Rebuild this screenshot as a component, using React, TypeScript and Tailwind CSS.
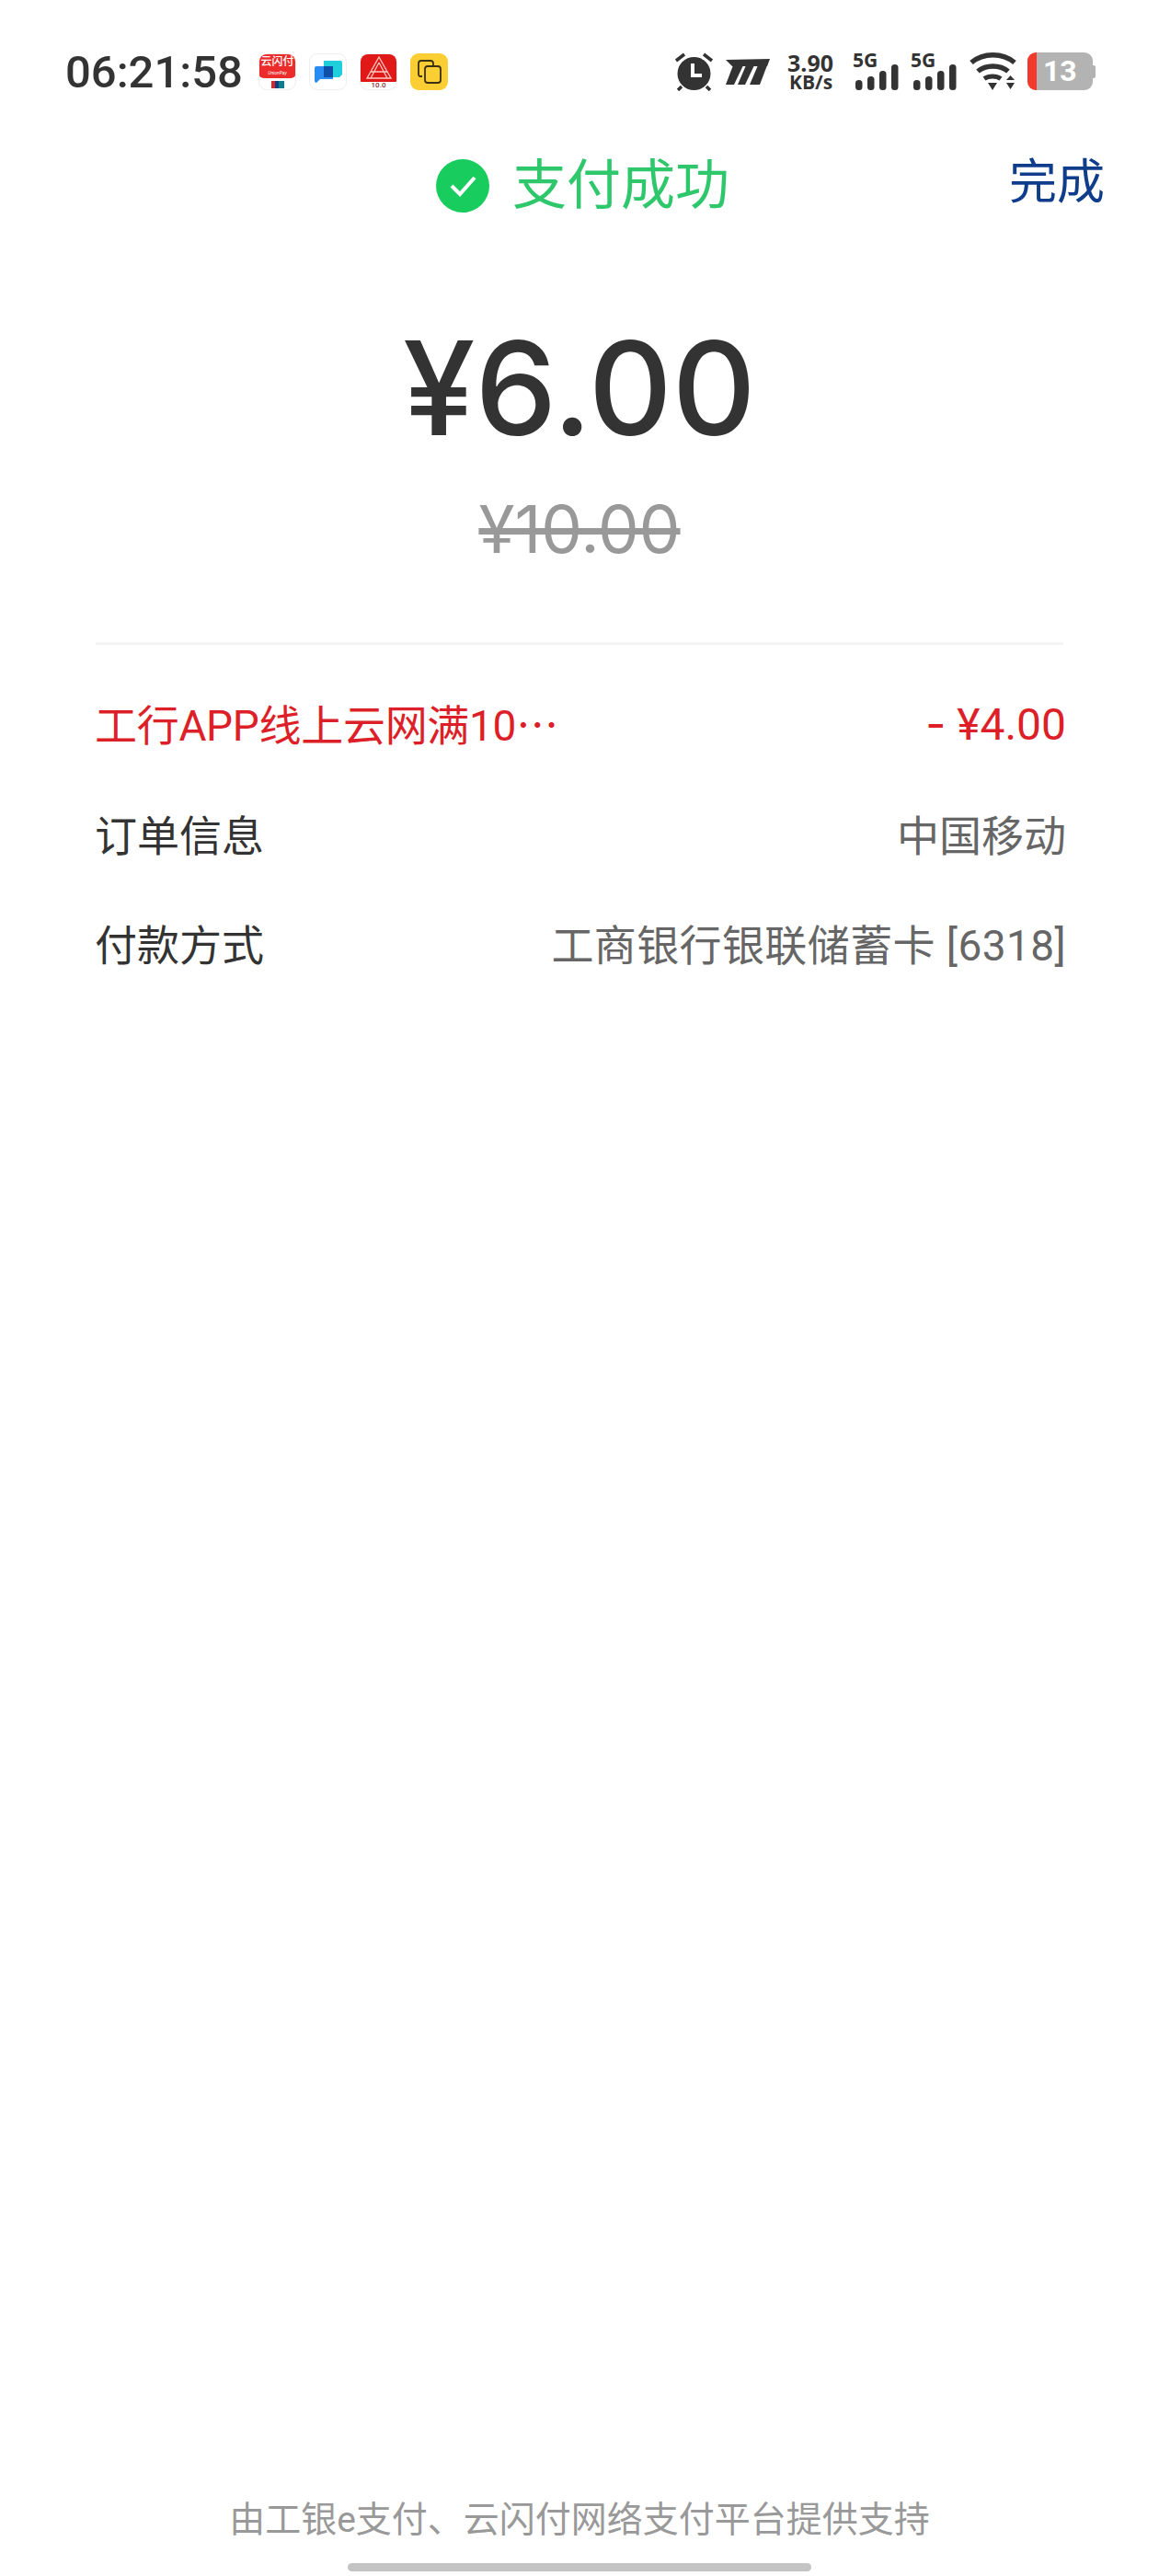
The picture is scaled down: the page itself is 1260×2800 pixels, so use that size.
const Signal = () => (
  <div className="flex flex-col w-[50px] h-[41px] mt-[1px]">
    <span className="font-['Open_Sans',sans-serif] font-bold text-[21px] leading-[15px] text-[#333]">5G</span>
    <svg className="-mt-[3px] ml-[3px]" width="47" height="28" viewBox="0 0 47 28">
      <rect x="0" y="17" width="7.5" height="11" rx="3.5" fill="#333" />
      <rect x="13" y="13" width="7.5" height="15" rx="3.5" fill="#333" />
      <rect x="26" y="7" width="7.5" height="21" rx="3.5" fill="#333" />
      <rect x="39" y="0" width="7.5" height="28" rx="3.5" fill="#333" />
    </svg>
  </div>
);

export default function App() {
  const font = "font-['Roboto','Noto_Sans_CJK_SC',sans-serif]";
  return (
    <div className={`w-[1260px] h-[2800px] bg-white flex flex-col ${font}`}>
      <div className="h-[170px] pl-[71px] pt-[57px] flex items-start">
        <span className="font-medium text-[49px] leading-[43px] text-[#333] w-[210px] shrink-0">06:21:58</span>
        <div className="flex gap-[14px] mt-[1px]">
          <div className="w-[41px] h-[40px] rounded-[9px] border border-[#eee] overflow-hidden flex flex-col items-center">
            <div className="w-[41px] h-[27px] -mt-[1px] bg-[#ec2b2b] rounded-b-[6px] flex flex-col items-center text-white">
              <span className="text-[12px] leading-[17px] mt-[1px] font-medium whitespace-nowrap">云闪付</span>
              <span className="text-[5px] leading-[6px] italic">UnionPay</span>
            </div>
            <svg className="mt-[3px]" width="14" height="8" viewBox="0 0 14 8">
              <rect x="0" y="0" width="6" height="8" fill="#d8262c" />
              <rect x="4" y="0" width="5" height="8" fill="#0f3d82" />
              <rect x="8" y="0" width="6" height="8" fill="#0c7f8c" />
            </svg>
          </div>
          <div className="w-[41px] h-[40px] rounded-[9px] border border-[#eee] flex items-center justify-center">
            <svg width="30" height="26" viewBox="0 0 30 26">
              <path d="M10 1h18a2 2 0 0 1 2 2v13l-3 3h-7V7H10z" fill="#1fd0dc" />
              <path d="M2 7h18v14H6l-4 4a2 2 0 0 1-2-2V9a2 2 0 0 1 2-2z" fill="#2a8cf2" />
              <path d="M10 7h10v12H10z" fill="#0f4fa8" />
            </svg>
          </div>
          <div className="w-[41px] h-[40px] rounded-[9px] border border-[#eee] overflow-hidden flex flex-col items-center">
            <div className="w-[41px] h-[31px] -mt-[1px] bg-[#e01818] rounded-b-[3px] flex items-center justify-center">
              <svg width="28" height="26" viewBox="0 0 28 26" fill="none" stroke="#ffc9c0" strokeWidth="1.3">
                <path d="M14 1L27 24H1z" />
                <path d="M14 7L23 24M14 7L5 24M5 17h18" />
              </svg>
            </div>
            <span className="text-[8px] leading-[8px] font-medium text-[#8a3030]">10.0</span>
          </div>
          <div className="w-[41px] h-[40px] rounded-[9px] bg-[#fbcf33] flex items-center justify-center">
            <svg width="26" height="26" viewBox="0 0 26 26" fill="none" stroke="#3b3012" strokeWidth="1.8">
              <path d="M5 18H3a2 2 0 0 1-2-2V4a3 3 0 0 1 3-3h10a3 3 0 0 1 3 3v3" />
              <rect x="8" y="7" width="17" height="18" rx="3" />
            </svg>
          </div>
        </div>
        <div className="flex items-start ml-[245px]">
          <svg width="45" height="42" viewBox="0 0 45 42">
            <circle cx="22.5" cy="23" r="18" fill="#333" />
            <path d="M21 12v13h10" fill="none" stroke="#fff" strokeWidth="4" />
            <path d="M3 9l9-7M42 9l-9-7M9 37l-4 4M36 37l4 4" fill="none" stroke="#333" strokeWidth="3.5" />
          </svg>
          <svg className="ml-[12px] mt-[7px]" width="48" height="28" viewBox="0 0 48 28" fill="#333">
            <polygon points="0,1 48,0 45,8 7,8" />
            <polygon points="8,7 19,7 9,28 0,28" />
            <polygon points="22,7 31,7 21,28 13,28" />
            <polygon points="35,7 45,7 37,28 26,28" />
          </svg>
          <div className="ml-[19px] w-[53px] flex flex-col font-['Open_Sans',sans-serif] font-bold text-[#333] whitespace-nowrap">
            <span className="text-[25px] leading-[22px]">3.90</span>
            <span className="text-[21px] leading-[20px] ml-[2px]">KB/s</span>
          </div>
          <div className="flex gap-[13px] ml-[18px]">
            <Signal />
            <Signal />
          </div>
          <svg className="ml-[14px]" width="51" height="41" viewBox="0 0 51 41">
            <path d="M2 11C15 0 36 0 49 11" fill="none" stroke="#333" strokeWidth="5.5" />
            <path d="M9 20.5C18 13 33 13 42 20.5" fill="none" stroke="#333" strokeWidth="5.5" />
            <path d="M16 28.5C21 25 29 25 34 28.5" fill="none" stroke="#333" strokeWidth="5" />
            <polygon points="20,33 30,33 25,41" fill="#333" />
            <polygon points="40,30 49,30 44.5,25" fill="#333" />
            <polygon points="40,33 49,33 44.5,40" fill="#333" />
          </svg>
          <div className="ml-[12px] flex items-center">
            <div className="w-[71px] h-[41px] rounded-[9px] overflow-hidden flex">
              <div className="w-[10px] bg-[#f23a2c]" />
              <div className="flex-1 bg-[#b3b3b3] flex items-center pl-[7px] font-bold text-[32px] leading-[41px] text-white">13</div>
            </div>
            <div className="w-[3px] h-[14px] rounded-r-[2px] bg-[#b3b3b3]" />
          </div>
        </div>
      </div>

      <div className="flex items-center justify-center h-[64px] pl-[7px] relative">
        <svg width="58" height="58" viewBox="0 0 58 58">
          <circle cx="29" cy="29" r="29" fill="#18cc5e" />
          <path d="M17 29l9 9 16-18" fill="none" stroke="#fff" strokeWidth="4" />
        </svg>
        <span className="ml-[25px] text-[59px] leading-[64px] text-[#2ec76b]">支付成功</span>
        <span className="absolute right-[59px] -top-[3px] text-[52px] leading-[64px] text-[#0f3d8c]">完成</span>
      </div>

      <div className="flex justify-center mt-[108px] font-['Inter',sans-serif] font-medium text-[141px] leading-[160px] text-[#333]">¥6.00</div>
      <div className="flex justify-center mt-[33px] font-['Inter',sans-serif] text-[71px] leading-[80px] text-[#999] line-through">¥10.00</div>
      <div className="mx-[104px] mt-[83px] h-[3px] bg-[#f4f4f4]" />

      <div className="pl-[103px] pr-[101px] mt-[26px] text-[46px]">
        <div className="flex justify-between h-[120px] items-center text-[#dc1f28]">
          <span className="tracking-[-0.3px]">工行APP线上云网满10<span className="font-['Noto_Sans_CJK_SC',sans-serif]">…</span></span>
          <span className="text-[48px]"><span className="font-['Inter',sans-serif]">-</span> ¥4.00</span>
        </div>
        <div className="flex justify-between h-[120px] items-center pt-[5px]">
          <span className="text-[#333]">订单信息</span>
          <span className="text-[#666]">中国移动</span>
        </div>
        <div className="flex justify-between h-[120px] items-center pt-[3px]">
          <span className="text-[#333]">付款方式</span>
          <span className="text-[#666] tracking-[0.4px]">工商银行银联储蓄卡 [6318]</span>
        </div>
      </div>

      <div className="mt-auto flex flex-col items-center pb-[5px]">
        <span className="text-[39px] leading-[50px] text-[#999]">由工银e支付、云闪付网络支付平台提供支持</span>
        <div className="mt-[22px] w-[504px] h-[9px] rounded-full bg-[#c4c4c4]" />
      </div>
    </div>
  );
}
